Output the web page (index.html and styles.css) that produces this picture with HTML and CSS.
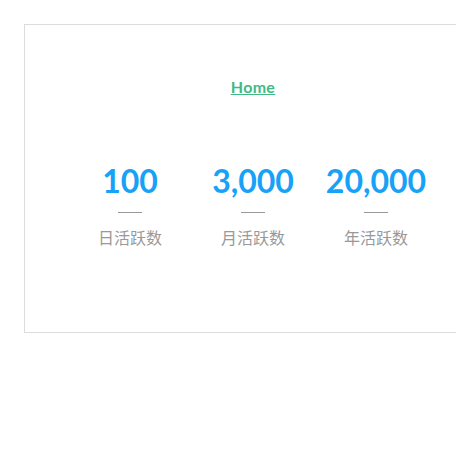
FILE: index.html
```html
<!DOCTYPE html>
<html>
<head>
<meta charset="utf-8">
<link rel="stylesheet" href="styles.css">
</head>
<body>
<div class="app">
  <nav class="nav"><a href="#" class="nav-link">Home</a></nav>
  <div class="stats">
    <div class="stat">
      <div class="num">100</div>
      <div class="line"></div>
      <div class="label">日活跃数</div>
    </div>
    <div class="stat">
      <div class="num">3,000</div>
      <div class="line"></div>
      <div class="label">月活跃数</div>
    </div>
    <div class="stat">
      <div class="num">20,000</div>
      <div class="line"></div>
      <div class="label">年活跃数</div>
    </div>
  </div>
</div>
</body>
</html>
```
FILE: styles.css
```css
html, body {
  margin: 0;
  padding: 0;
  background: #fff;
}
body {
  padding: 24px 0 0 24px;
  font-family: Lato, "Noto Sans CJK SC", sans-serif;
}
.app {
  width: 456px;
  border: 1px solid #dcdcdc;
  padding: 50px 0 84px;
  text-align: center;
  color: #2c3e50;
}
.nav {
  line-height: 24px;
  font-size: 16px;
}
.nav-link {
  color: #42b983;
  font-weight: bold;
  text-decoration: underline;
  letter-spacing: 0.3px;
}
.stats {
  display: flex;
  justify-content: center;
  margin-top: 62px;
}
.stat {
  width: 123px;
  display: flex;
  flex-direction: column;
  align-items: center;
}
.num {
  font-size: 32px;
  line-height: 40px;
  font-weight: bold;
  color: #17a1f7;
}
.line {
  width: 24px;
  height: 1px;
  background: #999;
  margin-top: 11px;
}
.label {
  margin-top: 13px;
  font-size: 16px;
  line-height: 22px;
  color: #999;
  font-family: "Noto Sans CJK SC", sans-serif;
}
```
